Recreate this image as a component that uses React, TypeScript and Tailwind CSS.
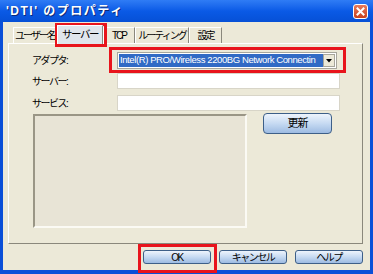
export default function App() {
  const tabs = [
    { label: 'ユーザー名', w: 'w-[44px]' },
    { label: 'サーバー', w: 'w-[46px]', active: true },
    { label: 'TCP', w: 'w-[32px]' },
    { label: 'ルーティング', w: 'w-[54px]' },
    { label: '設定', w: 'w-[33px]' },
  ]

  return (
    <div className="relative flex h-[274px] w-[373px] flex-col bg-[#0a4fd8] px-[3px] pb-[4px] font-['Liberation_Sans','Noto_Sans_CJK_JP',sans-serif] text-black">
      {/* title bar */}
      <div className="-mx-[3px] flex h-[22px] items-center justify-between bg-gradient-to-b from-[#2f7cf5] via-[#0a5ae6] to-[#0650d6] pl-[6px] pr-[5px]">
        <span className="text-[12px] font-bold tracking-[1.5px] text-white [text-shadow:1px_1px_0_#0a2a7a]">'DTI' のプロパティ</span>
        <div className="flex h-[15px] w-[15px] items-center justify-center rounded-[3px] border border-white bg-gradient-to-b from-[#e8795a] to-[#c8401c]">
          <svg width="9" height="9" viewBox="0 0 9 9">
            <path d="M1.5 1.5 L7.5 7.5 M7.5 1.5 L1.5 7.5" stroke="white" strokeWidth="2" strokeLinecap="square" />
          </svg>
        </div>
      </div>

      {/* body */}
      <div className="flex flex-1 flex-col bg-[#ece9d8] pl-[5px] pr-[7px] pt-[3px]">
        {/* tabs */}
        <div className="flex h-[18px] items-end pl-[5px]">
          {tabs.map((t) => (
            <div
              key={t.label}
              className={
                t.active
                  ? `${t.w} z-10 -mb-px flex h-[19px] items-center justify-center overflow-hidden whitespace-nowrap border-l border-t border-r border-l-white border-t-white border-r-[#8a887c] bg-[#dfe5ec] text-[10.5px] tracking-[-1.5px]`
                  : `${t.w} flex h-[16px] items-center justify-center overflow-hidden whitespace-nowrap border-l border-t border-r border-l-white border-t-white border-r-[#8a887c] text-[10px] tracking-[-2px]`
              }
            >
              {t.label}
            </div>
          ))}
        </div>

        {/* tab panel */}
        <div className="flex h-[201px] flex-col border border-l-white border-t-white border-r-[#8a887c] border-b-[#8a887c] pl-[23px] pt-[8px]">
          <div className="flex items-center">
            <span className="w-[85px] text-[10px] tracking-[-1.5px]">アダプタ:</span>
            <div className="flex h-[17px] w-[220px] items-center border border-[#a7a69c] bg-white p-px">
              <div className="flex h-full flex-1 items-center overflow-hidden whitespace-nowrap bg-[#316ac5] pl-[1px] text-[9.5px] tracking-[-0.4px] text-white">
                Intel(R) PRO/Wireless 2200BG Network Connectin
              </div>
              <div className="flex h-full w-[12px] items-center justify-center border border-[#a7a69c] bg-[#ece9d8]">
                <svg width="6" height="4" viewBox="0 0 6 4">
                  <path d="M0 0 H6 L3 3.5 Z" fill="black" />
                </svg>
              </div>
            </div>
          </div>
          <div className="mt-[4px] flex items-center">
            <span className="w-[85px] text-[10px] tracking-[-1.5px]">サーバー:</span>
            <div className="h-[16px] w-[223px] border border-[#d8d5c8] bg-white" />
          </div>
          <div className="mt-[6px] flex items-center">
            <span className="w-[85px] text-[10px] tracking-[-1.5px]">サービス:</span>
            <div className="h-[16px] w-[223px] border border-[#d8d5c8] bg-white" />
          </div>

          <div className="mt-[3px] flex items-start">
            <div className="ml-px h-[114px] w-[214px] border-2 border-l-[#9a9686] border-t-[#9a9686] border-r-[#fbfaf4] border-b-[#fbfaf4] bg-[#e8e4d6]" />
            <button className="ml-[16px] -mt-px flex h-[21px] w-[69px] items-center justify-center rounded-[4px] border border-[#3d5f88] bg-gradient-to-b from-[#eef4fc] via-[#c6daf2] to-[#9dbbe2] text-[11px] tracking-[-1px]">
              更新
            </button>
          </div>
        </div>

        {/* bottom buttons */}
        <div className="mt-[6px] flex justify-end gap-[8px]">
          {['OK', 'キャンセル', 'ヘルプ'].map((b) => (
            <button
              key={b}
              className="flex h-[14px] w-[68px] items-center justify-center rounded-[3px] border border-[#3d5f88] bg-gradient-to-b from-[#eef4fc] via-[#c6daf2] to-[#9dbbe2] text-[10px] tracking-[-1.5px]"
            >
              {b}
            </button>
          ))}
        </div>
      </div>

      {/* red annotation boxes */}
      <div className="pointer-events-none absolute left-[55px] top-[23px] h-[24px] w-[52px] border-[3px] border-[#e8141c]" />
      <div className="pointer-events-none absolute left-[109px] top-[47px] h-[26px] w-[237px] border-[3px] border-[#e8141c]" />
      <div className="pointer-events-none absolute left-[138px] top-[244px] h-[29px] w-[79px] border-[3px] border-[#e8141c]" />
    </div>
  )
}
